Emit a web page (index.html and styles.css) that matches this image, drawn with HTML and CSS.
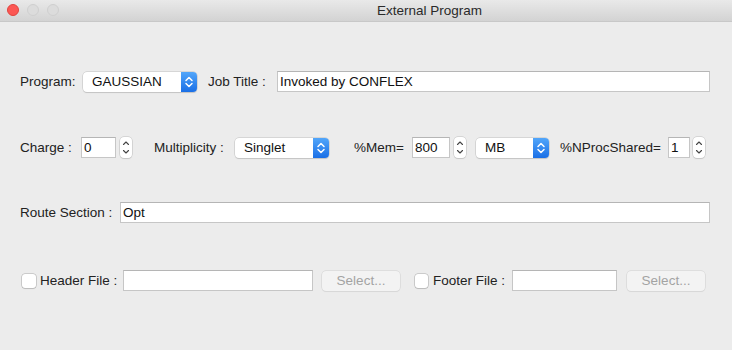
FILE: index.html
```html
<!DOCTYPE html>
<html>
<head>
<meta charset="utf-8">
<link rel="stylesheet" href="styles.css">
</head>
<body>
<div class="window">
  <div class="titlebar">
    <div class="lights">
      <span class="light red"></span>
      <span class="light gray"></span>
      <span class="light gray"></span>
    </div>
    <div class="title">External Program</div>
  </div>
  <div class="content">
    <div class="row row1">
      <span class="label w-l-program">Program:</span>
      <div class="popup w-program">
        <span class="popup-text">GAUSSIAN</span>
        <span class="popup-arrow"><svg width="16" height="20" viewBox="0 0 16 20"><path d="M5 8.5 L8 5.5 L11 8.5 M5 11.5 L8 14.5 L11 11.5" fill="none" stroke="#fff" stroke-width="1.5" stroke-linecap="round" stroke-linejoin="round"/></svg></span>
      </div>
      <span class="label w-l-job">Job Title :</span>
      <div class="field grow">Invoked by CONFLEX</div>
    </div>

    <div class="row row2">
      <span class="label w-l-charge">Charge :</span>
      <div class="field w-charge">0</div>
      <span class="stepper"><svg width="12" height="21" viewBox="0 0 12 21"><path d="M3.5 7.5 L6 5 L8.5 7.5 M3.5 13.5 L6 16 L8.5 13.5" fill="none" stroke="#444" stroke-width="1.1" stroke-linecap="round" stroke-linejoin="round"/></svg></span>
      <span class="label w-l-mult">Multiplicity :</span>
      <div class="popup w-mult">
        <span class="popup-text">Singlet</span>
        <span class="popup-arrow"><svg width="16" height="20" viewBox="0 0 16 20"><path d="M5 8.5 L8 5.5 L11 8.5 M5 11.5 L8 14.5 L11 11.5" fill="none" stroke="#fff" stroke-width="1.5" stroke-linecap="round" stroke-linejoin="round"/></svg></span>
      </div>
      <span class="label w-l-mem">%Mem=</span>
      <div class="field w-mem">800</div>
      <span class="stepper"><svg width="12" height="21" viewBox="0 0 12 21"><path d="M3.5 7.5 L6 5 L8.5 7.5 M3.5 13.5 L6 16 L8.5 13.5" fill="none" stroke="#444" stroke-width="1.1" stroke-linecap="round" stroke-linejoin="round"/></svg></span>
      <div class="popup w-mb">
        <span class="popup-text">MB</span>
        <span class="popup-arrow"><svg width="16" height="20" viewBox="0 0 16 20"><path d="M5 8.5 L8 5.5 L11 8.5 M5 11.5 L8 14.5 L11 11.5" fill="none" stroke="#fff" stroke-width="1.5" stroke-linecap="round" stroke-linejoin="round"/></svg></span>
      </div>
      <span class="label w-l-nproc">%NProcShared=</span>
      <div class="field w-nproc">1</div>
      <span class="stepper st-last"><svg width="12" height="21" viewBox="0 0 12 21"><path d="M3.5 7.5 L6 5 L8.5 7.5 M3.5 13.5 L6 16 L8.5 13.5" fill="none" stroke="#444" stroke-width="1.1" stroke-linecap="round" stroke-linejoin="round"/></svg></span>
    </div>

    <div class="row row3">
      <span class="label w-l-route">Route Section :</span>
      <div class="field grow">Opt</div>
    </div>

    <div class="row row4">
      <span class="checkbox"></span>
      <span class="label w-l-header">Header File :</span>
      <div class="field w-file"></div>
      <div class="button btn1">Select...</div>
      <span class="checkbox cb2"></span>
      <span class="label w-l-footer">Footer File :</span>
      <div class="field w-file2"></div>
      <div class="button btn2">Select...</div>
    </div>
  </div>
</div>
</body>
</html>
```

FILE: styles.css
```css
* { box-sizing: border-box; }
html, body {
  margin: 0;
  padding: 0;
  width: 732px;
  height: 350px;
  overflow: hidden;
  background: #ececec;
  font-family: "Liberation Sans", Arial, sans-serif;
  font-size: 13px;
  color: #222;
}
.window {
  width: 732px;
  height: 350px;
  display: flex;
  flex-direction: column;
}
.titlebar {
  height: 22px;
  background: linear-gradient(#e9e9e9, #d3d3d3);
  border-bottom: 1px solid #c8c8c8;
  position: relative;
  display: flex;
  align-items: center;
}
.lights {
  position: absolute;
  left: 7px;
  top: 4px;
  display: flex;
  gap: 8px;
}
.light {
  width: 12px;
  height: 12px;
  border-radius: 50%;
}
.light.red {
  background: #fc5753;
  border: 1px solid #e0443e;
}
.light.gray {
  background: #dcdcdc;
  border: 1px solid #cfcfcf;
}
.title {
  color: #2a2a2a;
  font-size: 13.5px;
  margin-left: 377px;
  white-space: nowrap;
}
.content {
  padding: 0 22px 0 20px;
  display: flex;
  flex-direction: column;
}
.row {
  display: flex;
  align-items: center;
  height: 21px;
}
.row1 { margin-top: 49px; }
.row2 { margin-top: 45px; }
.row3 { margin-top: 44px; }
.row4 { margin-top: 47px; }
.label {
  white-space: nowrap;
  flex: none;
  font-size: 13.5px;
  color: #222;
}
.field {
  flex: none;
  height: 21px;
  background: #fff;
  border: 1px solid #c6c6c6;
  border-top-color: #b5b5b5;
  padding: 0 2px;
  line-height: 19px;
  font-size: 13.5px;
  color: #111;
}
.grow { flex: 1; }
.popup {
  flex: none;
  height: 20px;
  background: #fff;
  border-radius: 4px;
  box-shadow: 0 0 0 0.5px #c0c0c0, 0 1px 1px rgba(0,0,0,0.15);
  display: flex;
  align-items: stretch;
  overflow: hidden;
}
.popup-text {
  flex: 1;
  padding-left: 9px;
  line-height: 20px;
  color: #111;
  font-size: 13.5px;
}
.popup-arrow {
  width: 16px;
  background: linear-gradient(#52a6fa, #1a6fe6);
  display: flex;
  align-items: center;
  justify-content: center;
}
.stepper {
  flex: none;
  width: 12px;
  height: 21px;
  margin-left: 4px;
  background: #fff;
  border-radius: 4px;
  box-shadow: 0 0 0 0.5px #bdbdbd, 0 1px 1px rgba(0,0,0,0.12);
  display: flex;
}
.st-last { margin-left: 3px; }
.checkbox {
  flex: none;
  width: 14px;
  height: 14px;
  background: #fff;
  border-radius: 3px;
  box-shadow: 0 0 0 0.5px #aaa, 0 1px 1px rgba(0,0,0,0.12);
  margin-left: 2px;
}
.button {
  flex: none;
  width: 78px;
  height: 20px;
  background: #f3f3f3;
  border-radius: 4px;
  box-shadow: 0 0 0 0.5px #cfcfcf, 0 1px 1px rgba(0,0,0,0.06);
  color: #a3a3a3;
  font-size: 13.5px;
  display: flex;
  align-items: center;
  justify-content: center;
}
/* row 1 */
.w-l-program { width: 63px; }
.w-program { width: 114px; }
.w-l-job { width: 69px; margin-left: 11px; }
/* row 2 */
.w-l-charge { width: 61px; }
.w-charge { width: 35px; }
.w-l-mult { width: 81px; margin-left: 22px; }
.w-mult { width: 94px; }
.w-l-mem { width: 58px; margin-left: 25px; }
.w-mem { width: 38px; }
.w-mb { width: 73px; margin-left: 10px; }
.w-l-nproc { width: 108px; margin-left: 11px; }
.w-nproc { width: 22px; }
/* row 3 */
.w-l-route { width: 100px; }
/* row 4 */
.w-l-header { width: 83px; margin-left: 4px; }
.w-file { width: 190px; }
.btn1 { margin-left: 9px; }
.cb2 { margin-left: 15px; width: 13px; }
.w-l-footer { width: 79px; margin-left: 5px; }
.w-file2 { width: 105px; }
.btn2 { margin-left: 10px; }
```
